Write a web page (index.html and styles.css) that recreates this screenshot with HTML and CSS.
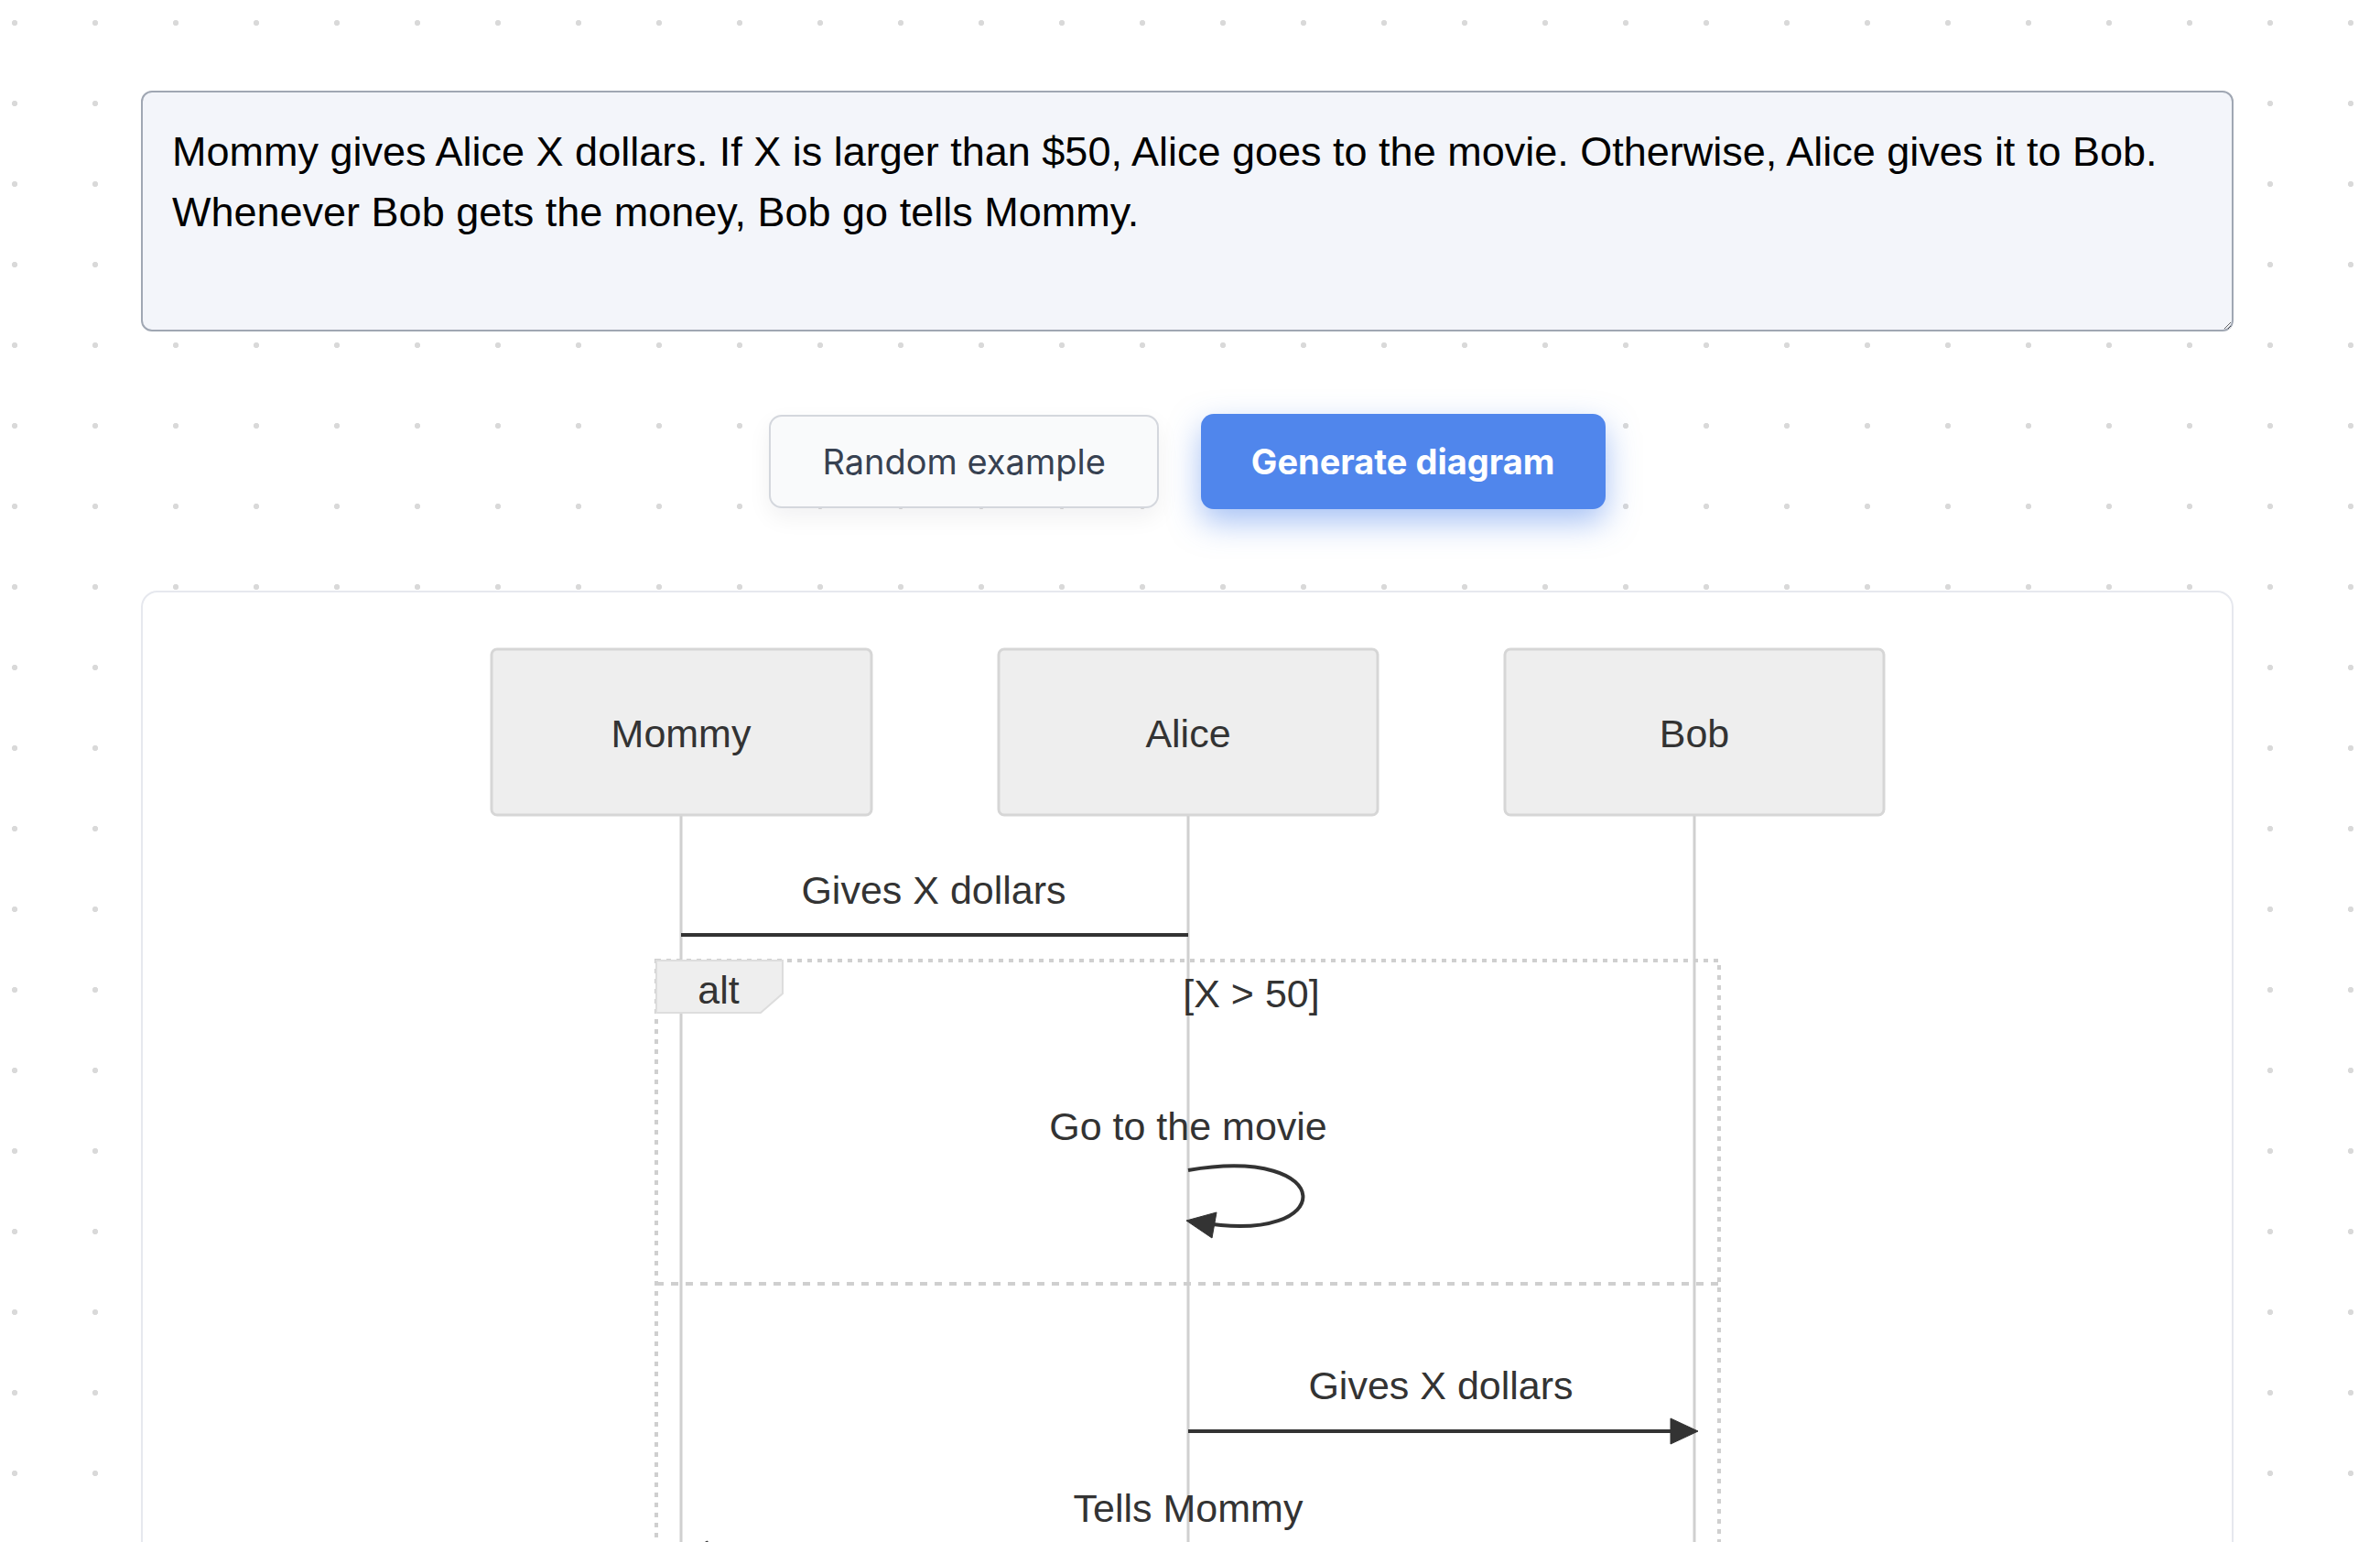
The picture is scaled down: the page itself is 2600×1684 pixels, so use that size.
FILE: index.html
```html
<!DOCTYPE html>
<html lang="en">
<head>
<meta charset="utf-8">
<title>Sequence diagram generator</title>
<link rel="stylesheet" href="styles.css">
</head>
<body>
<main class="page">
  <textarea class="prompt" spellcheck="false">Mommy gives Alice X dollars. If X is larger than $50, Alice goes to the movie. Otherwise, Alice gives it to Bob.
Whenever Bob gets the money, Bob go tells Mommy.</textarea>
  <div class="actions">
    <button class="btn btn-secondary" type="button">Random example</button>
    <button class="btn btn-primary" type="button">Generate diagram</button>
  </div>
  <section class="card">
    <svg class="diagram" width="2281" height="1100" viewBox="157 647 2281 1100" xmlns="http://www.w3.org/2000/svg">
      <g class="lifelines">
        <line x1="745" y1="890" x2="745" y2="1760"/>
        <line x1="1299" y1="890" x2="1299" y2="1760"/>
        <line x1="1852" y1="890" x2="1852" y2="1760"/>
      </g>
      <g class="actors">
        <rect x="538" y="709" width="415" height="181" rx="6"/>
        <rect x="1092" y="709" width="414" height="181" rx="6"/>
        <rect x="1645" y="709" width="414" height="181" rx="6"/>
      </g>
      <g class="labels">
        <text x="745" y="801">Mommy</text>
        <text x="1299" y="801">Alice</text>
        <text x="1852" y="801">Bob</text>
        <text x="1021" y="972">Gives X dollars</text>
        <text x="1368" y="1085">[X &gt; 50]</text>
        <text x="1299" y="1230">Go to the movie</text>
        <text x="1575" y="1513">Gives X dollars</text>
        <text x="1299" y="1647">Tells Mommy</text>
      </g>
      <g class="frame">
        <rect class="frame-box" x="718" y="1049" width="1161" height="760"/>
        <line class="frame-divider" x1="718" y1="1402" x2="1879" y2="1402"/>
        <polygon class="frame-tag" points="718,1049 856,1049 856,1085 832,1106 718,1106"/>
        <text class="frame-tag-text" x="786" y="1081">alt</text>
      </g>
      <g class="messages">
        <line x1="745" y1="1021" x2="1299" y2="1021"/>
        <path d="M1299,1278 C1464,1250 1464,1361 1312,1335"/>
        <line x1="1299" y1="1563" x2="1830" y2="1563"/>
        <line x1="1852" y1="1697" x2="768" y2="1697"/>
      </g>
      <g class="heads">
        <polygon points="1297,1333 1330,1324 1325,1352"/>
        <polygon points="1826,1549 1856,1563 1826,1577"/>
        <polygon points="774,1683 744,1697 774,1711"/>
      </g>
    </svg>
  </section>
</main>
</body>
</html>
```

FILE: styles.css
```css
html, body {
  margin: 0;
  padding: 0;
}

body {
  width: 2600px;
  height: 1684px;
  overflow: hidden;
  background-color: #ffffff;
  background-image: radial-gradient(circle, #d9d9d9 2.8px, transparent 3.4px);
  background-size: 88px 88px;
  background-position: -28px -19px;
  font-family: "Liberation Sans", Arial, sans-serif;
}

.page {
  width: 2286px;
  padding: 99px 0 0 154px;
  display: flex;
  flex-direction: column;
}

.prompt {
  display: block;
  box-sizing: border-box;
  width: 2286px;
  height: 263px;
  margin: 0;
  padding: 32px 32px;
  border: 2px solid #a0a7b3;
  border-radius: 12px;
  background: #f3f5fa;
  color: #000000;
  font-family: "Liberation Sans", Arial, sans-serif;
  font-size: 45px;
  line-height: 66px;
  outline: none;
  resize: vertical;
}

.actions {
  display: flex;
  justify-content: center;
  align-items: center;
  gap: 46px;
  margin-top: 90px;
}

.btn {
  margin: 0;
  font-family: Inter, "Liberation Sans", sans-serif;
  font-size: 38px;
  line-height: 54px;
  border-radius: 14px;
  cursor: pointer;
}

.btn-secondary {
  padding: 22px 56px;
  border: 2px solid #d4d7dd;
  background: #f9fafb;
  color: #374151;
  font-weight: 400;
  box-shadow: 0 10px 26px rgba(17, 24, 39, 0.06);
}

.btn-primary {
  padding: 25px 55px;
  border: none;
  background: #5086ec;
  color: #ffffff;
  font-weight: 700;
  box-shadow: 0 14px 34px rgba(80, 134, 236, 0.5);
}

.card {
  margin-top: 89px;
  height: 1200px;
  border: 2px solid #e6e8ee;
  border-radius: 18px;
  background: #ffffff;
  overflow: hidden;
}

.diagram {
  display: block;
}

.lifelines line {
  stroke: #d0d0d0;
  stroke-width: 3;
}

.actors rect {
  fill: #eeeeee;
  stroke: #d6d6d6;
  stroke-width: 3;
}

.diagram text {
  font-family: "Liberation Sans", Arial, sans-serif;
  font-size: 43px;
  fill: #333333;
  text-anchor: middle;
  dominant-baseline: central;
}

.frame-box {
  fill: none;
  stroke: #cfcfcf;
  stroke-width: 4;
  stroke-dasharray: 5 6;
}

.frame-divider {
  stroke: #cfcfcf;
  stroke-width: 4;
  stroke-dasharray: 8 8;
}

.frame-tag {
  fill: #eeeeee;
  stroke: #dddddd;
  stroke-width: 2;
}

.messages line,
.messages path {
  fill: none;
  stroke: #333333;
  stroke-width: 4;
}

.heads polygon {
  fill: #333333;
  stroke: #333333;
  stroke-width: 1;
}
```
